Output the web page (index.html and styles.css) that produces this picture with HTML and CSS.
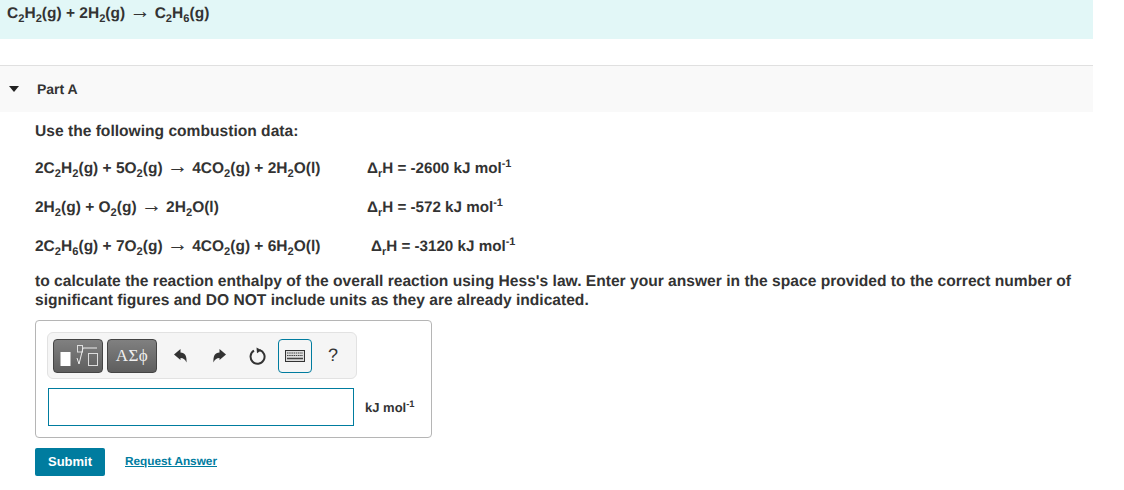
FILE: index.html
```html
<!DOCTYPE html>
<html lang="en">
<head>
    <meta charset="UTF-8">
    <title>Part A</title>
    <link rel="stylesheet" href="styles.css">
</head>
<body>
    <div class="page">
        <div class="banner">C<sub>2</sub>H<sub>2</sub>(g) + 2H<sub>2</sub>(g) <span class="arrow">→</span> C<sub>2</sub>H<sub>6</sub>(g)</div>

        <div class="part-header">
            <span class="caret"></span>
            <span class="part-title">Part A</span>
        </div>

        <div class="part-body">
            <p class="lead">Use the following combustion data:</p>

            <div class="eq-row">
                <span class="eq">2C<sub>2</sub>H<sub>2</sub>(g) + 5O<sub>2</sub>(g) <span class="arrow">→</span> 4CO<sub>2</sub>(g) + 2H<sub>2</sub>O(l)</span>
                <span class="dh">Δ<sub>r</sub>H = -2600 kJ mol<sup>-1</sup></span>
            </div>
            <div class="eq-row">
                <span class="eq">2H<sub>2</sub>(g) + O<sub>2</sub>(g) <span class="arrow">→</span> 2H<sub>2</sub>O(l)</span>
                <span class="dh">Δ<sub>r</sub>H = -572 kJ mol<sup>-1</sup></span>
            </div>
            <div class="eq-row">
                <span class="eq">2C<sub>2</sub>H<sub>6</sub>(g) + 7O<sub>2</sub>(g) <span class="arrow">→</span> 4CO<sub>2</sub>(g) + 6H<sub>2</sub>O(l)</span>
                <span class="dh dh-shift">Δ<sub>r</sub>H = -3120 kJ mol<sup>-1</sup></span>
            </div>

            <p class="question">to calculate the reaction enthalpy of the overall reaction using Hess's law. Enter your answer in the space provided to the correct number of significant figures and DO NOT include units as they are already indicated.</p>

            <div class="answer-box">
                <div class="toolbar">
                    <button class="tpl-btn tpl-math">
                        <svg width="44" height="30" viewBox="0 0 44 30">
                            <rect x="4.500" y="11" width="10" height="14" fill="#fff"/>
                            <rect x="21.500" y="4.500" width="5" height="6.500" fill="none" stroke="#ddd" stroke-width="1"/>
                            <path d="M21 17l2 6 4-16h14" fill="none" stroke="#eee" stroke-width="1"/>
                            <rect x="32.500" y="12.500" width="9" height="12" fill="none" stroke="#ddd" stroke-width="1"/>
                        </svg>
                    </button>
                    <button class="tpl-btn tpl-greek">ΑΣϕ</button>
                    <span class="tool tool-undo">
                        <svg width="16" height="16" viewBox="0 0 16 16"><path d="M1 6.500L7.500 1v3.500c4.500 0 6.500 3.500 6 10-1.200-3-3-4.500-6-4.500V12z" fill="#333"/></svg>
                    </span>
                    <span class="tool tool-redo">
                        <svg width="16" height="16" viewBox="0 0 16 16"><path d="M15 6.500L8.500 1v3.500c-4.500 0-6.500 3.500-6 10 1.200-3 3-4.500 6-4.500V12z" fill="#333"/></svg>
                    </span>
                    <span class="tool tool-reset">
                        <svg width="18" height="18" viewBox="0 0 18 18"><path d="M6 3.700A7 7 0 1 0 11.500 3" fill="none" stroke="#333" stroke-width="2"/><path d="M8.500 0.500l5 2.700-4.500 3z" fill="#333"/></svg>
                    </span>
                    <span class="tool-kbd">
                        <svg width="20" height="12" viewBox="0 0 20 12">
                            <rect x="0.500" y="0.500" width="19" height="11" fill="#ddd" stroke="#333"/>
                            <path d="M2 3h16M2 5.500h16" stroke="#444" stroke-width="1.200" stroke-dasharray="1.500 .7"/>
                            <path d="M2 8.500h16" stroke="#444" stroke-width="1.500"/>
                        </svg>
                    </span>
                    <span class="tool-help">?</span>
                </div>
                <div class="input-row">
                    <div class="answer-input"></div>
                    <span class="units">kJ mol<sup>-1</sup></span>
                </div>
            </div>

            <div class="actions">
                <button class="submit">Submit</button>
                <a class="request" href="#">Request Answer</a>
            </div>
        </div>
    </div>
</body>
</html>
```

FILE: styles.css
```css
html, body {
    margin: 0;
    background: #fff;
}

body {
    font-family: "Liberation Sans", Arial, sans-serif;
    color: #333;
    height: 490px;
    overflow: hidden;
    text-rendering: geometricPrecision;
}

.page {
    width: 1093px;
}

sub, sup {
    font-size: 0.72em;
    line-height: 0;
}

.arrow {
    font-size: 1.35em;
    font-weight: normal;
    line-height: 0;
}

.banner {
    height: 39px;
    box-sizing: border-box;
    background-color: #e2f7f7;
    padding: 4px 0 0 7px;
    font-size: 15.500px;
    font-weight: bold;
    line-height: 20px;
}

.part-header {
    margin-top: 26px;
    height: 47px;
    box-sizing: border-box;
    border-top: 1px solid #e0e0e0;
    background-color: #f9f9f9;
    display: flex;
    align-items: center;
}

.caret {
    width: 0;
    height: 0;
    margin-left: 9px;
    border-left: 5px solid transparent;
    border-right: 5px solid transparent;
    border-top: 6px solid #222;
}

.part-title {
    margin-left: 18px;
    font-size: 14px;
    font-weight: bold;
}

.part-body {
    padding-left: 35px;
    font-size: 15.600px;
    font-weight: bold;
    line-height: 19px;
}

.lead {
    margin: 10px 0 0;
}

.eq-row {
    display: flex;
    margin-top: 20px;
    height: 19px;
    font-size: 15.500px;
}

.lead + .eq-row {
    margin-top: 18px;
}

.eq {
    width: 332px;
}

.dh {
    font-size: 15.200px;
}

.dh-shift {
    margin-left: 4px;
}

.question {
    margin: 16px 0 0;
    width: 1045px;
}

.answer-box {
    margin-top: 10px;
    width: 397px;
    height: 118px;
    box-sizing: border-box;
    border: 1px solid #b5b5b5;
    border-radius: 4px;
    padding: 11px 11px;
}

.toolbar {
    width: 310px;
    height: 47px;
    box-sizing: border-box;
    background-color: #f5f5f5;
    border: 1px solid #e2e2e2;
    border-radius: 6px;
    display: flex;
    align-items: center;
    padding-left: 5px;
}

.tpl-btn {
    height: 34px;
    padding: 0;
    border: 1px solid #444;
    border-radius: 4px;
    background: linear-gradient(#808080, #5e5e5e);
    color: #f0f0f0;
    display: flex;
    align-items: center;
    justify-content: center;
}

.tpl-math {
    width: 50px;
}

.tpl-greek {
    width: 50px;
    margin-left: 4px;
    font-family: "Liberation Serif", "Times New Roman", serif;
    font-size: 17px;
    font-weight: normal;
    letter-spacing: 0.5px;
}

.tool {
    display: flex;
    align-items: center;
    justify-content: center;
}

.tool-undo {
    margin-left: 16px;
}

.tool-redo {
    margin-left: 22px;
}

.tool-reset {
    margin-left: 21px;
}

.tool-kbd {
    width: 32px;
    height: 32px;
    margin-left: 12px;
    border: 1px solid #007c9f;
    border-radius: 4px;
    display: flex;
    align-items: center;
    justify-content: center;
}

.tool-help {
    margin-left: 16px;
    font-size: 18px;
    font-weight: normal;
    color: #333;
}

.input-row {
    display: flex;
    align-items: center;
    margin-top: 9px;
}

.answer-input {
    width: 304px;
    height: 36px;
    margin-left: 1px;
    border: 1px solid #007c9f;
    background: #fff;
}

.units {
    margin-left: 11px;
    font-size: 13px;
}

.actions {
    margin-top: 10px;
    display: flex;
    align-items: center;
}

.submit {
    width: 70px;
    height: 28px;
    padding: 0 0 2px;
    border: 0;
    border-radius: 2px;
    background-color: #007c9f;
    color: #fff;
    font-family: inherit;
    font-size: 13px;
    font-weight: bold;
}

.request {
    margin-left: 20px;
    margin-bottom: 2px;
    font-size: 11.800px;
    color: #007c9f;
}
```
